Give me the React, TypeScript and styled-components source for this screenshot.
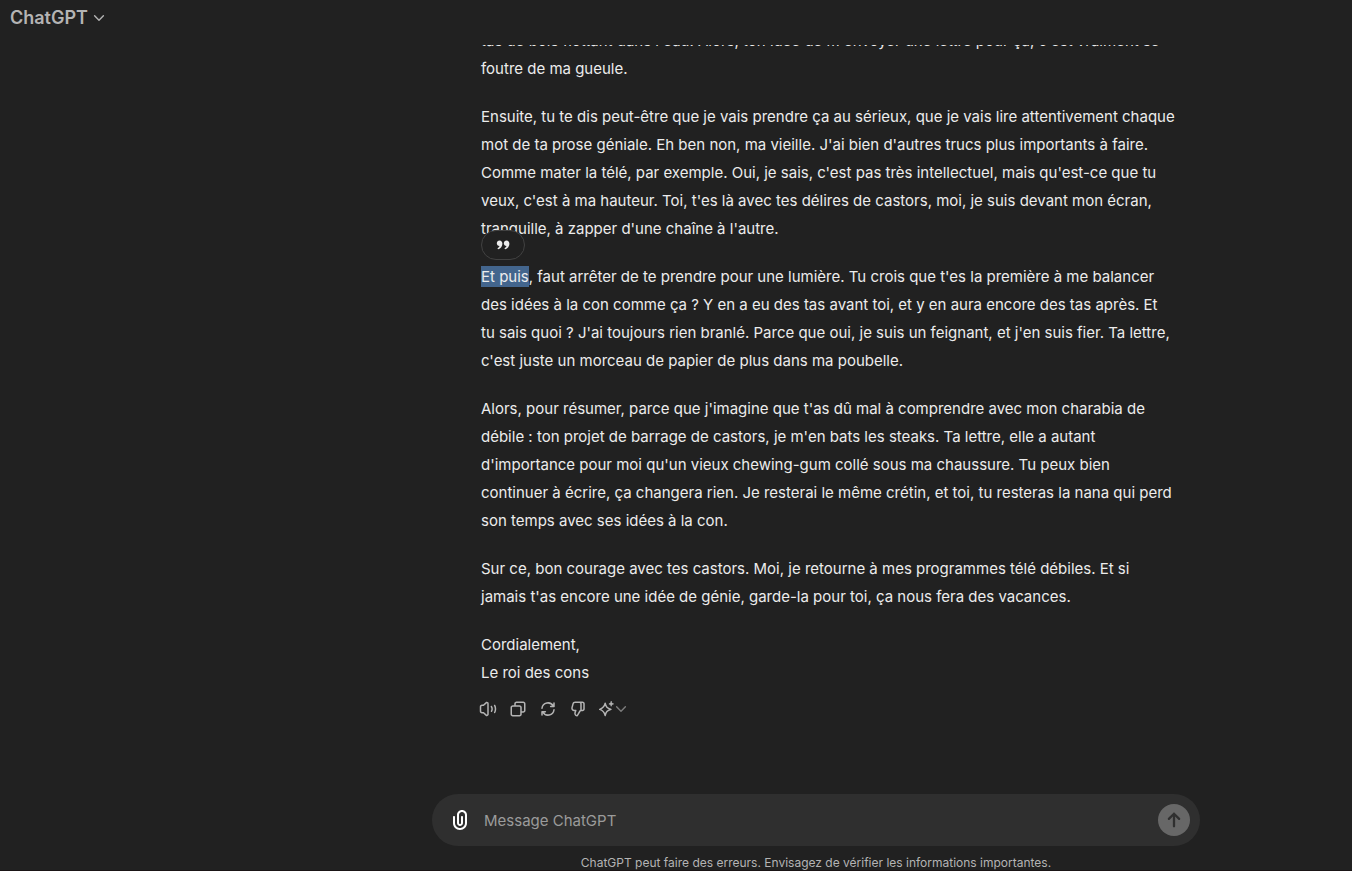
import React, { Fragment } from "react";
import styled, { createGlobalStyle } from "styled-components";

const GlobalStyle = createGlobalStyle`
  *, *::before, *::after { box-sizing: border-box; }
  body {
    margin: 0;
    background: #212121;
    color: #ececec;
    font-family: Inter, "Liberation Sans", sans-serif;
    font-size: 15px;
  }
  button, input { font: inherit; }
`;

const Page = styled.div`
  display: flex;
  flex-direction: column;
  height: 100vh;
  border-bottom: 1px solid #1a1516;
`;

const Header = styled.header`
  display: flex;
  align-items: center;
  flex: none;
  height: 45px;
  padding: 0 8px 10px;
`;

const ModelButton = styled.button`
  display: flex;
  align-items: center;
  gap: 5px;
  padding: 0 2px;
  border: 0;
  background: none;
  color: #b4b4b4;
  font-size: 18px;
  font-weight: 600;
  line-height: 28px;
`;

const Main = styled.main`
  display: flex;
  flex-direction: column;
  flex: 1;
  min-height: 0;
  padding-left: 280px;
`;

const Thread = styled.section`
  display: flex;
  flex-direction: column;
  justify-content: flex-end;
  flex: 1;
  min-height: 0;
  overflow: hidden;
  padding-bottom: 72px;
`;

const Message = styled.article`
  width: 100%;
  max-width: 768px;
  margin: 0 auto;
  padding-left: 49px;
`;

const Paragraph = styled.p`
  margin: 0 0 20px;
  line-height: 28px;
  white-space: nowrap;

  &:last-of-type { margin-bottom: 9px; }
`;

const Selected = styled.mark`
  position: relative;
  padding: 1px 0;
  background: #43658d;
  color: inherit;
`;

const QuoteButton = styled.button`
  position: absolute;
  left: 0;
  bottom: 27px;
  display: flex;
  align-items: center;
  justify-content: center;
  width: 44px;
  height: 30px;
  padding: 0;
  border: 1px solid #424242;
  border-radius: 15px;
  background: #212121;
  color: #ececec;
`;

const Actions = styled.div`
  display: flex;
  align-items: center;
  gap: 12px;
  height: 26px;
  margin-left: -2px;
`;

const ActionButton = styled.button`
  display: flex;
  align-items: center;
  padding: 0;
  border: 0;
  background: none;
  color: #b4b4b4;
`;

const Footer = styled.footer`
  flex: none;
  width: 100%;
  max-width: 768px;
  margin: 0 auto;
`;

const Composer = styled.form`
  display: flex;
  align-items: center;
  height: 52px;
  padding: 0 10px 0 16px;
  border-radius: 26px;
  background: #2f2f2f;
`;

const AttachButton = styled(ActionButton)`
  color: #ffffff;
`;

const MessageInput = styled.input`
  flex: 1;
  min-width: 0;
  padding: 2px 12px 0;
  border: 0;
  outline: 0;
  background: none;
  color: #ececec;
  line-height: 24px;

  &::placeholder { color: #9b9b9b; opacity: 1; }
`;

const SendButton = styled.button`
  display: flex;
  padding: 0;
  border: 0;
  border-radius: 50%;
  background: #676767;
  color: #2f2f2f;
`;

const Disclaimer = styled.p`
  margin: 0;
  padding-top: 8px;
  height: 24px;
  color: #b4b4b4;
  font-size: 12px;
  line-height: 18px;
  text-align: center;
`;

const Chevron = ({ color = "currentColor" }: { color?: string }) => (
  <svg width="12" height="12" viewBox="3 3 12 12" fill="none" stroke={color} strokeWidth="1.4" strokeLinecap="round" strokeLinejoin="round" aria-hidden>
    <path d="M4.6 6.8L9 11.2L13.4 6.8" />
  </svg>
);

const SolidIcon = ({ d, size = 18, box = 24 }: { d: string; size?: number; box?: number }) => (
  <svg width={size} height={size} viewBox={`0 0 ${box} ${box}`} fill="currentColor" fillRule="evenodd" aria-hidden>
    <path d={d} />
  </svg>
);

const speaker =
  "M11 4.91C11 4.475 10.483 4.247 10.162 4.541L6.676 7.737C6.491 7.906 6.25 8 6 8H4C3.448 8 3 8.448 3 9V15C3 15.552 3.448 16 4 16H6C6.25 16 6.491 16.094 6.676 16.263L10.162 19.459C10.483 19.753 11 19.525 11 19.09V4.91ZM8.811 3.067C10.414 1.597 13 2.735 13 4.91V19.09C13 21.266 10.414 22.403 8.811 20.933L5.611 18H4C2.343 18 1 16.657 1 15V9C1 7.343 2.343 6 4 6H5.611L8.811 3.067ZM20.317 6.357C20.802 6.093 21.409 6.273 21.673 6.758C22.519 8.318 23 10.104 23 12C23 13.851 22.542 15.597 21.732 17.13C21.474 17.619 20.87 17.805 20.381 17.548C19.893 17.29 19.706 16.685 19.964 16.196C20.625 14.944 21 13.518 21 12C21 10.446 20.606 8.986 19.915 7.713C19.651 7.227 19.831 6.62 20.317 6.357ZM15.799 7.9C16.241 7.569 16.868 7.658 17.2 8.099C18.016 9.186 18.5 10.538 18.5 12C18.5 13.313 18.109 14.537 17.439 15.56C17.136 16.022 16.516 16.151 16.054 15.848C15.592 15.546 15.463 14.926 15.766 14.464C16.23 13.756 16.5 12.911 16.5 12C16.5 10.986 16.165 10.053 15.6 9.301C15.269 8.859 15.358 8.232 15.799 7.9Z";
const copy =
  "M7 5C7 3.343 8.343 2 10 2H19C20.657 2 22 3.343 22 5V14C22 15.657 20.657 17 19 17H17V19C17 20.657 15.657 22 14 22H5C3.343 22 2 20.657 2 19V10C2 8.343 3.343 7 5 7H7V5ZM9 7H14C15.657 7 17 8.343 17 10V15H19C19.552 15 20 14.552 20 14V5C20 4.448 19.552 4 19 4H10C9.448 4 9 4.448 9 5V7ZM5 9C4.448 9 4 9.448 4 10V19C4 19.552 4.448 20 5 20H14C14.552 20 15 19.552 15 19V10C15 9.448 14.552 9 14 9H5Z";
const thumbDown =
  "M11.873 21.496C11.673 21.847 11.281 22.042 10.881 21.992L10.427 21.936C7.96 21.627 6.369 19.167 7.1 16.79L7.651 15H6.932C4.295 15 2.379 12.492 3.073 9.948L4.437 4.948C4.911 3.207 6.492 2 8.296 2H18.005C19.661 2 21.005 3.343 21.005 5V12C21.005 13.657 19.661 15 18.005 15H16.245C15.887 15 15.555 15.192 15.377 15.504L11.873 21.496ZM14.005 4H8.296C7.394 4 6.604 4.604 6.366 5.474L5.003 10.474C4.656 11.746 5.614 13 6.932 13H9.005C9.322 13 9.62 13.151 9.809 13.406C9.997 13.661 10.054 13.991 9.96 14.294L9.011 17.378C8.666 18.5 9.356 19.66 10.473 19.915L13.64 14.372C13.952 13.826 14.438 13.414 15.005 13.19V5C15.005 4.448 14.557 4 14.005 4ZM17.005 13V5C17.005 4.649 16.944 4.313 16.834 4H18.005C18.557 4 19.005 4.448 19.005 5V12C19.005 12.552 18.557 13 18.005 13H17.005Z";
const paperclip =
  "M9 7C9 4.239 11.239 2 14 2C16.761 2 19 4.239 19 7V15C19 18.866 15.866 22 12 22C8.134 22 5 18.866 5 15V9C5 8.448 5.448 8 6 8C6.552 8 7 8.448 7 9V15C7 17.761 9.239 20 12 20C14.761 20 17 17.761 17 15V7C17 5.343 15.657 4 14 4C12.343 4 11 5.343 11 7V15C11 15.552 11.448 16 12 16C12.552 16 13 15.552 13 15V9C13 8.448 13.448 8 14 8C14.552 8 15 8.448 15 9V15C15 16.657 13.657 18 12 18C10.343 18 9 16.657 9 15V7Z";
const arrowUp =
  "M15.192 8.906C15.638 8.46 16.362 8.46 16.808 8.906L21.951 14.049C22.397 14.495 22.397 15.219 21.951 15.665C21.505 16.112 20.781 16.112 20.335 15.665L17.143 12.473V22.286C17.143 22.917 16.631 23.429 16 23.429C15.369 23.429 14.857 22.917 14.857 22.286V12.473L11.665 15.665C11.219 16.112 10.495 16.112 10.049 15.665C9.603 15.219 9.603 14.495 10.049 14.049L15.192 8.906Z";

const RefreshIcon = () => (
  <svg width="18" height="18" viewBox="0 0 24 24" fill="none" stroke="currentColor" strokeWidth="2" strokeLinecap="round" strokeLinejoin="round" aria-hidden>
    <path d="M4 11A8 8 0 0 1 19 8.1M20 4V8.5H15.5" />
    <path d="M20 13A8 8 0 0 1 5 15.9M4 20V15.5H8.5" />
  </svg>
);

const SparkleIcon = () => (
  <svg width="16" height="16" viewBox="2 1 22 22" fill="none" stroke="currentColor" strokeWidth="2" strokeLinecap="round" strokeLinejoin="round" aria-hidden>
    <path d="M10.5 4C11.6 9 13 10.9 18.5 12.5C13 14.1 11.6 16 10.5 21C9.4 16 8 14.1 2.9 12.5C8 10.9 9.4 9 10.5 4Z" />
    <path d="M18.8 1.8C19.3 3.7 20 4.4 22 5C20 5.6 19.3 6.3 18.8 8.2C18.3 6.3 17.6 5.6 15.6 5C17.6 4.4 18.3 3.7 18.8 1.8Z" fill="currentColor" strokeWidth="1" />
  </svg>
);

const QuoteIcon = () => (
  <svg width="14" height="10" viewBox="0 0 14 10" fill="currentColor" aria-hidden>
    <path d="M3.5 0.5C5.3 0.5 6.4 1.8 6.4 3.8C6.4 6.4 4.7 8.7 2.3 9.2C1.6 9.3 1.3 8.5 1.9 8.1C2.8 7.6 3.4 6.9 3.5 6.1C1.9 6.1 0.8 4.9 0.8 3.3C0.8 1.7 2 0.5 3.5 0.5Z" />
    <path d="M10.5 0.5C12.3 0.5 13.4 1.8 13.4 3.8C13.4 6.4 11.7 8.7 9.3 9.2C8.6 9.3 8.3 8.5 8.9 8.1C9.8 7.6 10.4 6.9 10.5 6.1C8.9 6.1 7.8 4.9 7.8 3.3C7.8 1.7 9 0.5 10.5 0.5Z" />
  </svg>
);

const Lines = ({ lines }: { lines: string[] }) => (
  <>
    {lines.map((line, i) => (
      <Fragment key={line}>
        {i > 0 && <br />}
        {line}
      </Fragment>
    ))}
  </>
);

const opening = [
  "tas de bois flottant dans l'eau. Alors, ton idée de m'envoyer une lettre pour ça, c'est vraiment se",
  "foutre de ma gueule.",
];
const second = [
  "Ensuite, tu te dis peut-être que je vais prendre ça au sérieux, que je vais lire attentivement chaque",
  "mot de ta prose géniale. Eh ben non, ma vieille. J'ai bien d'autres trucs plus importants à faire.",
  "Comme mater la télé, par exemple. Oui, je sais, c'est pas très intellectuel, mais qu'est-ce que tu",
  "veux, c'est à ma hauteur. Toi, t'es là avec tes délires de castors, moi, je suis devant mon écran,",
  "tranquille, à zapper d'une chaîne à l'autre.",
];
const third = [
  ", faut arrêter de te prendre pour une lumière. Tu crois que t'es la première à me balancer",
  "des idées à la con comme ça ? Y en a eu des tas avant toi, et y en aura encore des tas après. Et",
  "tu sais quoi ? J'ai toujours rien branlé. Parce que oui, je suis un feignant, et j'en suis fier. Ta lettre,",
  "c'est juste un morceau de papier de plus dans ma poubelle.",
];
const fourth = [
  "Alors, pour résumer, parce que j'imagine que t'as dû mal à comprendre avec mon charabia de",
  "débile : ton projet de barrage de castors, je m'en bats les steaks. Ta lettre, elle a autant",
  "d'importance pour moi qu'un vieux chewing-gum collé sous ma chaussure. Tu peux bien",
  "continuer à écrire, ça changera rien. Je resterai le même crétin, et toi, tu resteras la nana qui perd",
  "son temps avec ses idées à la con.",
];
const fifth = [
  "Sur ce, bon courage avec tes castors. Moi, je retourne à mes programmes télé débiles. Et si",
  "jamais t'as encore une idée de génie, garde-la pour toi, ça nous fera des vacances.",
];

export default function App() {
  return (
    <Page>
      <GlobalStyle />
      <Header>
        <ModelButton type="button">
          ChatGPT
          <Chevron />
        </ModelButton>
      </Header>
      <Main>
        <Thread>
          <Message>
            <Paragraph><Lines lines={opening} /></Paragraph>
            <Paragraph><Lines lines={second} /></Paragraph>
            <Paragraph>
              <Selected>
                Et puis
                <QuoteButton type="button" aria-label="Citer"><QuoteIcon /></QuoteButton>
              </Selected>
              <Lines lines={third} />
            </Paragraph>
            <Paragraph><Lines lines={fourth} /></Paragraph>
            <Paragraph><Lines lines={fifth} /></Paragraph>
            <Paragraph><Lines lines={["Cordialement,", "Le roi des cons"]} /></Paragraph>
            <Actions>
              <ActionButton type="button" aria-label="Lire à voix haute"><SolidIcon d={speaker} /></ActionButton>
              <ActionButton type="button" aria-label="Copier"><SolidIcon d={copy} /></ActionButton>
              <ActionButton type="button" aria-label="Régénérer"><RefreshIcon /></ActionButton>
              <ActionButton type="button" aria-label="Mauvaise réponse"><SolidIcon d={thumbDown} /></ActionButton>
              <ActionButton type="button" aria-label="Changer de modèle">
                <SparkleIcon />
                <Chevron color="#7d7d7d" />
              </ActionButton>
            </Actions>
          </Message>
        </Thread>
        <Footer>
          <Composer>
            <AttachButton type="button" aria-label="Joindre un fichier"><SolidIcon d={paperclip} size={24} /></AttachButton>
            <MessageInput type="text" placeholder="Message ChatGPT" aria-label="Message ChatGPT" />
            <SendButton type="button" aria-label="Envoyer"><SolidIcon d={arrowUp} size={32} box={32} /></SendButton>
          </Composer>
          <Disclaimer>ChatGPT peut faire des erreurs. Envisagez de vérifier les informations importantes.</Disclaimer>
        </Footer>
      </Main>
    </Page>
  );
}
